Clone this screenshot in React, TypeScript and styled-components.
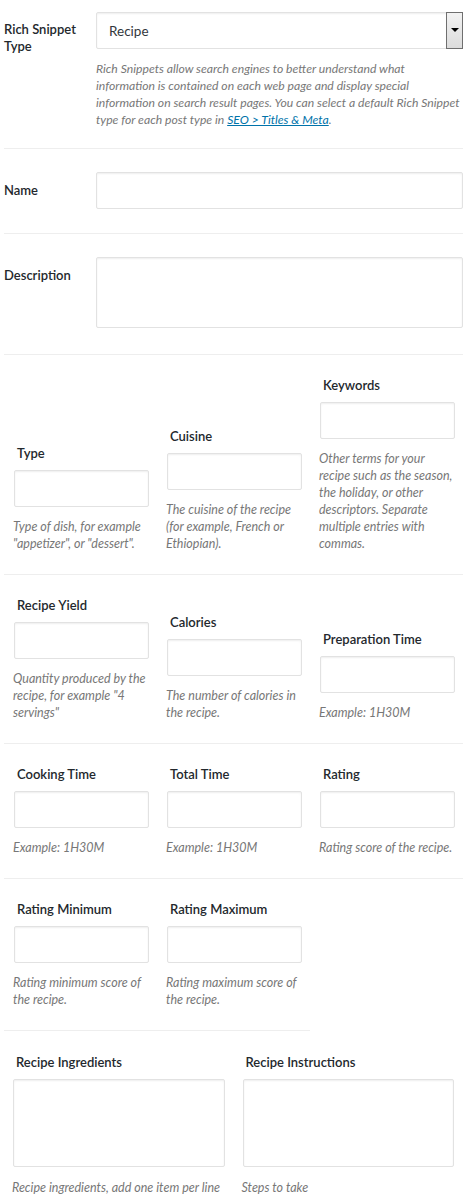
import styled, { createGlobalStyle } from "styled-components";

const GlobalStyle = createGlobalStyle`
  html, body {
    margin: 0;
    padding: 0;
    background: #fff;
  }
  body {
    font-family: Lato, "Open Sans", sans-serif;
    color: #23282d;
  }
  * {
    box-sizing: border-box;
  }
`;

type Field = {
  label: string;
  help: string;
};

const rows: { cols: number; fields: Field[] }[] = [
  {
    cols: 3,
    fields: [
      { label: "Type", help: 'Type of dish, for example "appetizer", or "dessert".' },
      { label: "Cuisine", help: "The cuisine of the recipe (for example, French or Ethiopian)." },
      {
        label: "Keywords",
        help: "Other terms for your recipe such as the season, the holiday, or other descriptors. Separate multiple entries with commas.",
      },
    ],
  },
  {
    cols: 3,
    fields: [
      { label: "Recipe Yield", help: 'Quantity produced by the recipe, for example "4 servings"' },
      { label: "Calories", help: "The number of calories in the recipe." },
      { label: "Preparation Time", help: "Example: 1H30M" },
    ],
  },
  {
    cols: 3,
    fields: [
      { label: "Cooking Time", help: "Example: 1H30M" },
      { label: "Total Time", help: "Example: 1H30M" },
      { label: "Rating", help: "Rating score of the recipe." },
    ],
  },
  {
    cols: 2,
    fields: [
      { label: "Rating Minimum", help: "Rating minimum score of the recipe." },
      { label: "Rating Maximum", help: "Rating maximum score of the recipe." },
    ],
  },
];

export default function App() {
  return (
    <>
      <GlobalStyle />
      <Page>
        <FormRow pad="12px 0 20px">
          <RowLabel top={9}>Rich Snippet Type</RowLabel>
          <RowField>
            <Select>
              <span>Recipe</span>
              <SelectArrow />
            </Select>
            <Help>
              Rich Snippets allow search engines to better understand what
              information is contained on each web page and display special
              information on search result pages. You can select a default Rich
              Snippet type for each post type in{" "}
              <a href="#">SEO &gt; Titles &amp; Meta</a>.
            </Help>
          </RowField>
        </FormRow>

        <FormRow pad="23px 0 24px">
          <RowLabel top={10}>Name</RowLabel>
          <RowField>
            <TextInput />
          </RowField>
        </FormRow>

        <FormRow pad="23px 0 26px">
          <RowLabel top={10}>Description</RowLabel>
          <RowField>
            <TextArea h={71} />
          </RowField>
        </FormRow>

        {rows.map((row, i) => (
          <GridRow key={i} cols={row.cols}>
            {row.fields.map((f) => (
              <Column key={f.label}>
                <ColLabel>{f.label}</ColLabel>
                <TextInput />
                <ColHelp>{f.help}</ColHelp>
              </Column>
            ))}
          </GridRow>
        ))}

        <WideRow>
          <WideColumn>
            <ColLabel>Recipe Ingredients</ColLabel>
            <TextArea h={88} />
            <ColHelp gap={12}>Recipe ingredients, add one item per line</ColHelp>
          </WideColumn>
          <WideColumn>
            <ColLabel>Recipe Instructions</ColLabel>
            <TextArea h={88} />
            <ColHelp gap={12}>Steps to take</ColHelp>
          </WideColumn>
        </WideRow>
      </Page>
    </>
  );
}

const Page = styled.div`
  width: 472px;
  padding: 0 9px 0 4px;
`;

const FormRow = styled.div<{ pad: string }>`
  display: flex;
  padding: ${(p) => p.pad};
  border-bottom: 1px solid #eeeeee;
`;

const RowLabel = styled.div<{ top: number }>`
  width: 92px;
  flex-shrink: 0;
  padding: ${(p) => p.top}px 8px 0 0;
  font-size: 13px;
  font-weight: 600;
  line-height: 17px;
`;

const RowField = styled.div`
  flex: 1;
`;

const fieldBox = `
  display: block;
  width: 100%;
  margin: 0;
  border: 1px solid #e2e2e2;
  border-radius: 2px;
  box-shadow: inset 0 1px 2px rgba(0, 0, 0, 0.07);
  background: #fff;
  font-family: inherit;
  outline: none;
`;

const Select = styled.div`
  ${fieldBox}
  display: flex;
  align-items: center;
  height: 37px;
  padding-left: 12px;
  font-size: 13.5px;
  color: #32373c;
`;

const SelectArrow = styled.span`
  position: relative;
  margin-left: auto;
  width: 17px;
  height: 37px;
  margin-right: -1px;
  border: 1px solid #6f6f6f;
  background: linear-gradient(#f2f2f2, #dcdcdc);

  &::after {
    content: "";
    position: absolute;
    left: 4px;
    top: 15px;
    border-left: 4px solid transparent;
    border-right: 4px solid transparent;
    border-top: 4px solid #000;
  }
`;

const Help = styled.p`
  margin: 11px 0 0;
  font-size: 12.2px;
  font-style: italic;
  line-height: 17px;
  color: #777;

  a {
    color: #0073aa;
    text-decoration: underline;
  }
`;

const TextInput = styled.input.attrs({ type: "text" })`
  ${fieldBox}
  height: 37px;
`;

const TextArea = styled.textarea<{ h: number }>`
  ${fieldBox}
  height: ${(p) => p.h}px;
  resize: none;
`;

const GridRow = styled.div<{ cols: number }>`
  display: grid;
  grid-template-columns: repeat(${(p) => p.cols}, 153px);
  align-items: end;
  width: ${(p) => p.cols * 153}px;
  padding: 22px 0 22px;
  border-bottom: 1px solid #eeeeee;
`;

const Column = styled.div`
  padding: 0 8px 0 10px;
`;

const ColLabel = styled.div`
  padding-left: 3px;
  margin-bottom: 8px;
  font-size: 13px;
  font-weight: 600;
  line-height: 17px;
`;

const ColHelp = styled.p<{ gap?: number }>`
  margin: ${(p) => p.gap ?? 11}px 0 0 -1px;
  font-size: 12.5px;
  font-style: italic;
  line-height: 17px;
  color: #777;
`;

const WideRow = styled.div`
  display: grid;
  grid-template-columns: 1fr 1fr;
  align-items: end;
  padding: 23px 0 8px;
`;

const WideColumn = styled.div`
  padding: 0 9px;
`;
